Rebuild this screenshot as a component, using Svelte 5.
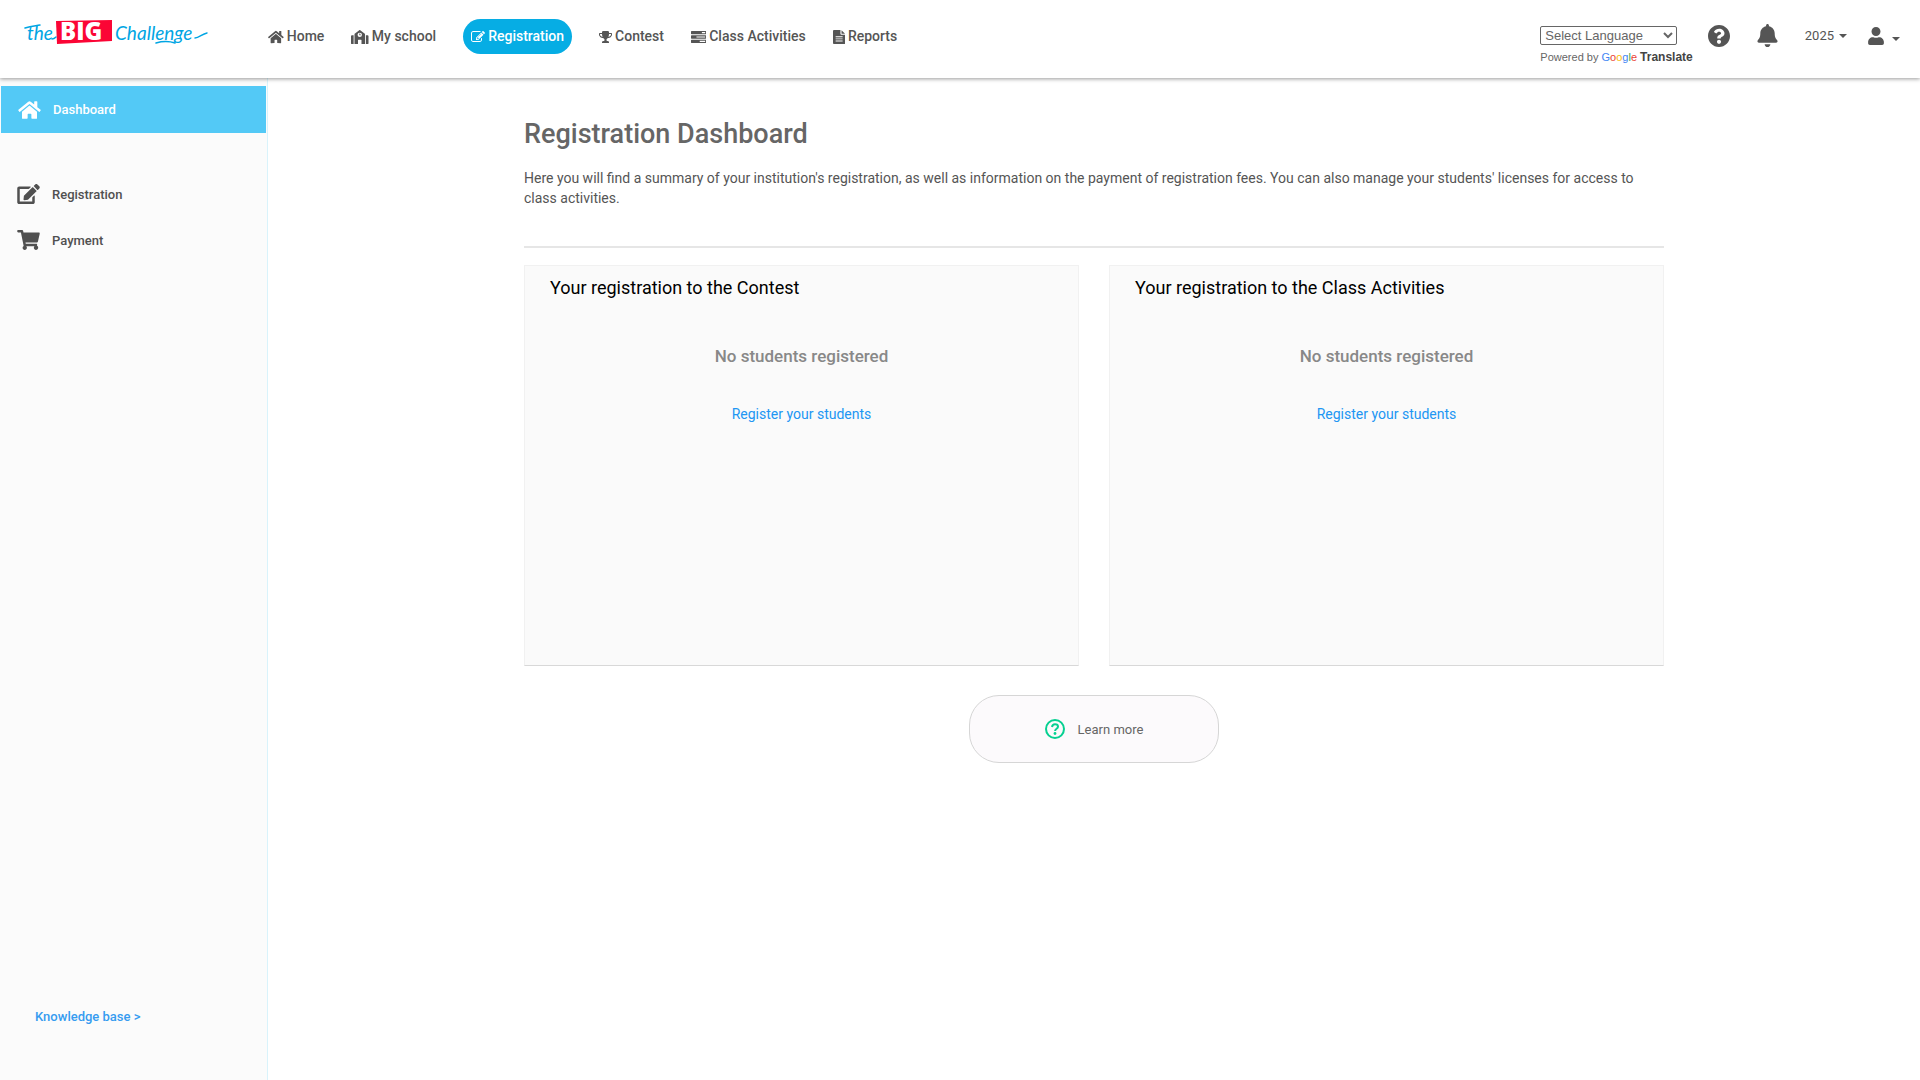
<script lang="ts">
  type Icon = { box: string; d: string };

  const icons: Record<string, Icon> = {
    home: {
      box: '0 0 576 512',
      d: 'M280.37 148.26L96 300.11V464a16 16 0 0 0 16 16l112.06-.29a16 16 0 0 0 15.92-16V368a16 16 0 0 1 16-16h64a16 16 0 0 1 16 16v95.64a16 16 0 0 0 16 16.05L464 480a16 16 0 0 0 16-16V300L295.67 148.26a12.19 12.19 0 0 0-15.3 0zM571.6 251.47L488 182.56V44.05a12 12 0 0 0-12-12h-56a12 12 0 0 0-12 12v72.61L318.47 43a48 48 0 0 0-61 0L4.34 251.47a12 12 0 0 0-1.6 16.9l25.5 31A12 12 0 0 0 45.15 301l235.22-193.74a12.19 12.19 0 0 1 15.3 0L530.9 301a12 12 0 0 0 16.9-1.6l25.5-31a12 12 0 0 0-1.7-16.93z',
    },
    school: {
      box: '0 0 640 512',
      d: 'M0 224v272c0 9 7 16 16 16h80V192H32c-18 0-32 14-32 32zm608-32h-64v320h80c9 0 16-7 16-16V224c0-18-14-32-32-32zM494 126L338 6c-11-8-25-8-36 0L146 126c-11 8-18 16-18 32v354h128V368c0-9 7-16 16-16h96c9 0 16 7 16 16v144h128V158c0-16-7-24-18-32zM320 256a80 80 0 1 1 0-160 80 80 0 0 1 0 160zm16-96v-24c0-4-4-8-8-8h-16c-4 0-8 4-8 8v48c0 4 4 8 8 8h40c4 0 8-4 8-8v-16c0-4-4-8-8-8z',
    },
    write: {
      box: '0 0 1792 1792',
      d: 'M888 1184l116-116-152-152-116 116v56h96v96h56zm440-720q-16-16-33 1l-350 350q-17 17-1 33t33-1l350-350q17-17 1-33zm80 594v190q0 119-84.5 203.5t-203.5 84.5h-832q-119 0-203.5-84.5t-84.5-203.5v-832q0-119 84.5-203.5t203.5-84.5h832q63 0 117 25 15 7 18 23 3 17-9 29l-49 49q-14 14-32 8-23-6-45-6h-832q-66 0-113 47t-47 113v832q0 66 47 113t113 47h832q66 0 113-47t47-113v-126q0-13 9-22l64-64q15-15 35-7t20 29zm-96-738l288 288-672 672h-288v-288zm444 132l-92 92-288-288 92-92q28-28 68-28t68 28l152 152q28 28 28 68t-28 68z',
    },
    trophy: {
      box: '64 128 1664 1536',
      d: 'M522 883q-74-162-74-371h-256v96q0 78 94.500 162t235.500 113zm1078-275v-96h-256q0 209-74 371 141-29 235.500-113t94.500-162zm128-128v128q0 71-41.500 143t-112 130-173 97.500-215.500 44.500q-42 54-95 95-38 34-52.500 72.500t-14.500 89.500q0 54 30.500 91t97.500 37q75 0 133.500 45.500t58.500 114.500v64q0 14-9 23t-23 9h-832q-14 0-23-9t-9-23v-64q0-69 58.500-114.500t133.500-45.500q67 0 97.500-37t30.500-91q0-51-14.500-89.500t-52.500-72.500q-53-41-95-95-113-5-215.500-44.500t-173-97.500-112-130-41.500-143v-128q0-40 28-68t68-28h288v-96q0-66 47-113t113-47h576q66 0 113 47t47 113v96h288q40 0 68 28t28 68z',
    },
    tasks: {
      box: '0 128 1792 1408',
      d: 'M1024 1408h640v-128h-640v128zm-384-512h1024v-128H640v128zm640-512h384V256h-384v128zm512 832v256q0 26-19 45t-45 19H64q-26 0-45-19t-19-45v-256q0-26 19-45t45-19h1664q26 0 45 19t19 45zm0-512v256q0 26-19 45t-45 19H64q-26 0-45-19t-19-45V704q0-26 19-45t45-19h1664q26 0 45 19t19 45zm0-512v256q0 26-19 45t-45 19H64q-26 0-45-19t-19-45V192q0-26 19-45t45-19h1664q26 0 45 19t19 45z',
    },
    file: {
      box: '0 0 448 512',
      d: 'M272 0v144c0 18 14 32 32 32h144v304c0 18-14 32-32 32H32c-18 0-32-14-32-32V32C0 14 14 0 32 0zm40 6l130 130H312zM96 232v34h256v-34zm0 76v34h256v-34zm0 76v34h256v-34z',
    },
    edit: {
      box: '0 0 576 512',
      d: 'M402.6 83.2l90.2 90.2c3.8 3.8 3.8 10 0 13.8L274.4 405.6l-92.8 10.3c-12.4 1.4-22.9-9.1-21.5-21.5l10.3-92.8L388.8 83.2c3.8-3.8 10-3.8 13.8 0zm162-22.9l-48.8-48.8c-15.2-15.2-39.9-15.2-55.2 0l-35.4 35.4c-3.8 3.8-3.8 10 0 13.8l90.2 90.2c3.8 3.8 10 3.8 13.8 0l35.4-35.4c15.2-15.3 15.2-40 0-55.2zM384 346.2V448H64V128h229.8c3.2 0 6.2-1.3 8.5-3.5l40-40c7.6-7.6 2.2-20.5-8.5-20.5H48C21.5 64 0 85.5 0 112v352c0 26.5 21.5 48 48 48h352c26.5 0 48-21.5 48-48V306.2c0-10.7-12.9-16-20.5-8.5l-40 40c-2.2 2.3-3.5 5.3-3.5 8.5z',
    },
    cart: {
      box: '0 0 576 512',
      d: 'M528.12 301.319l47.273-208C578.806 78.301 567.391 64 551.99 64H159.208l-9.166-44.81C147.758 8.021 137.93 0 126.529 0H24C10.745 0 0 10.745 0 24v16c0 13.255 10.745 24 24 24h69.883l70.248 343.435C147.325 417.1 136 435.222 136 456c0 30.928 25.072 56 56 56s56-25.072 56-56c0-15.674-6.447-29.835-16.824-40h209.647C430.447 426.165 424 440.326 424 456c0 30.928 25.072 56 56 56s56-25.072 56-56c0-22.172-12.888-41.332-31.579-50.405l5.517-24.276c3.413-15.018-8.002-29.319-23.403-29.319H218.117l-6.545-32h293.145c11.206 0 20.92-7.754 23.403-18.681z',
    },
    help: {
      box: '8 8 496 496',
      d: 'M504 256c0 136.997-111.043 248-248 248S8 392.997 8 256C8 119.083 119.043 8 256 8s248 111.083 248 248zM262.655 90c-54.497 0-89.255 22.957-116.549 63.758-3.536 5.286-2.353 12.415 2.715 16.258l34.699 26.31c5.205 3.947 12.621 3.008 16.665-2.122 17.864-22.658 30.113-35.797 57.303-35.797 20.429 0 45.698 13.148 45.698 32.958 0 14.976-12.363 22.667-32.534 33.976C247.128 238.528 216 254.941 216 296v4c0 6.627 5.373 12 12 12h56c6.627 0 12-5.373 12-12v-1.333c0-28.462 83.186-29.647 83.186-106.667 0-58.002-60.165-102-116.531-102zM256 338c-25.365 0-46 20.635-46 46 0 25.364 20.635 46 46 46s46-20.636 46-46c0-25.365-20.635-46-46-46z',
    },
    bell: {
      box: '0 0 448 512',
      d: 'M224 512c35.32 0 63.97-28.65 63.97-64H160.03c0 35.35 28.65 64 63.97 64zm215.39-149.71c-19.32-20.76-55.47-51.99-55.47-154.29 0-77.7-54.48-139.9-127.94-155.16V32c0-17.67-14.32-32-31.98-32s-31.98 14.33-31.98 32v20.84C118.56 68.1 64.08 130.3 64.08 208c0 102.3-36.15 133.53-55.47 154.29-6 6.45-8.66 14.16-8.61 21.71.11 16.4 12.98 32 32.1 32h383.8c19.12 0 32-15.6 32.1-32 .05-7.55-2.61-15.27-8.61-21.71z',
    },
    user: {
      box: '0 0 448 512',
      d: 'M224 256c70.7 0 128-57.3 128-128S294.7 0 224 0 96 57.3 96 128s57.3 128 128 128zm89.6 32h-16.7c-22.2 10.2-46.9 16-72.9 16s-50.6-5.8-72.9-16h-16.7C60.2 288 0 348.2 0 422.4V464c0 26.5 21.5 48 48 48h352c26.5 0 48-21.5 48-48v-41.6c0-74.2-60.2-134.4-134.4-134.4z',
    },
  };

  const nav = [
    { label: 'Home', icon: 'home' },
    { label: 'My school', icon: 'school' },
    { label: 'Registration', icon: 'write', active: true },
    { label: 'Contest', icon: 'trophy' },
    { label: 'Class Activities', icon: 'tasks' },
    { label: 'Reports', icon: 'file' },
  ];

  const side = [
    { label: 'Dashboard', icon: 'home', active: true },
    { label: 'Registration', icon: 'edit' },
    { label: 'Payment', icon: 'cart' },
  ];

  const cards = ['Your registration to the Contest', 'Your registration to the Class Activities'];
</script>

{#snippet glyph(name: string)}
  <svg class="icon {name}" viewBox={icons[name].box} aria-hidden="true">
    <path fill-rule="evenodd" d={icons[name].d} />
  </svg>
{/snippet}

<div class="page">
  <header>
    <a class="brand" href="#home" aria-label="The Big Challenge">
      <svg width="188" height="34" viewBox="0 0 188 34">
        <path class="flag" d="M32 2l56-1v21l-55 3z" />
        <g class="script">
          <text x="3" y="21">the</text>
          <text x="91" y="21">Challenge</text>
        </g>
        <g class="swash">
          <path d="M1 9c6-2 9-2 15-3M28 20c2 0 3-1 4-2" />
          <path d="M171 19c4 0 7-4 12-5M132 24c7-2 13-2 19 0" />
        </g>
        <text class="big" x="36" y="21">BIG</text>
      </svg>
    </a>

    <nav>
      {#each nav as item}
        <a href="#{item.icon}" class:active={item.active}>{@render glyph(item.icon)}{item.label}</a>
      {/each}
    </nav>

    <div class="tools">
      <div class="translate">
        <select aria-label="Select Language">
          <option>Select Language</option>
        </select>
        <div class="powered">
          Powered by
          <span class="google"><i class="b">G</i><i class="r">o</i><i class="y">o</i><i class="b">g</i><i class="g">l</i><i class="r">e</i></span>
          <strong>Translate</strong>
        </div>
      </div>
      <button class="tool" aria-label="Help">{@render glyph('help')}</button>
      <button class="tool" aria-label="Notifications">{@render glyph('bell')}</button>
      <button class="year">2025 <span class="caret"></span></button>
      <button class="account" aria-label="Account">{@render glyph('user')}<span class="caret"></span></button>
    </div>
  </header>

  <div class="body">
    <aside>
      {#each side as item}
        <a class="link" href="#{item.label}" class:active={item.active}>{@render glyph(item.icon)}{item.label}</a>
      {/each}
      <a class="kb" href="#kb">Knowledge base &gt;</a>
    </aside>

    <main>
      <div class="content">
        <h1>Registration Dashboard</h1>
        <p class="intro">
          Here you will find a summary of your institution's registration, as well as information on the payment of
          registration fees. You can also manage your students' licenses for access to class activities.
        </p>
        <hr />
        <div class="cards">
          {#each cards as title}
            <section>
              <h2>{title}</h2>
              <p>No students registered</p>
              <a href="#register">Register your students</a>
            </section>
          {/each}
        </div>
        <button class="more">
          <svg width="20" height="20" viewBox="0 0 20 20" aria-hidden="true">
            <circle cx="10" cy="10" r="9" />
            <path d="M7 8c.3-2 1.500-2.700 3-2.700 1.800 0 3 .9 3 2.400 0 2.100-2.900 2-2.900 4.200" />
            <circle class="dot" cx="10" cy="14.500" r="1.400" />
          </svg>
          Learn more
        </button>
      </div>
    </main>
  </div>
</div>

<style>
  :global(body) {
    background: #fff;
    font-family: Roboto, sans-serif;
    color: #555;
  }

  a {
    text-decoration: none;
  }

  button {
    font-family: inherit;
    color: inherit;
    background: none;
    border: 0;
    padding: 0;
  }

  .page {
    display: flex;
    flex-direction: column;
    min-height: 100vh;
  }

  .icon {
    display: block;
    flex: none;
    fill: currentColor;
  }

  header {
    position: relative;
    z-index: 1;
    display: flex;
    align-items: center;
    height: 78px;
    padding: 0 20px 0 24px;
    background: #fff;
    box-shadow: 0 1px 4px rgba(0, 0, 0, 0.4);
    box-sizing: border-box;
  }

  .brand {
    width: 244px;
    padding-bottom: 6px;
  }

  .brand svg {
    display: block;
  }

  .script {
    font: italic 400 19px Lato, sans-serif;
    fill: #00a5e3;
  }

  .swash {
    fill: none;
    stroke: #00a5e3;
    stroke-width: 1.5;
    stroke-linecap: round;
  }

  .flag {
    fill: #fb0535;
  }

  .big {
    font: 800 24px "Open Sans", sans-serif;
    fill: #fff;
  }

  nav {
    display: flex;
    align-items: center;
    gap: 27px;
    margin-bottom: 5px;
  }

  nav a {
    display: flex;
    align-items: center;
    gap: 3px;
    font-size: 14px;
    font-weight: 500;
    line-height: 35px;
    color: #555;
  }

  nav a.active {
    padding: 0 8px;
    border-radius: 18px;
    background: #06ade4;
    color: #fff;
  }

  nav .icon {
    height: 14px;
  }

  nav .trophy,
  nav .tasks {
    height: 12px;
  }

  .tools {
    display: flex;
    align-items: center;
    margin-left: auto;
    margin-bottom: 7px;
  }

  .translate {
    margin-top: 19px;
    font-family: "Liberation Sans", Arial, sans-serif;
  }

  select {
    display: block;
    width: 137px;
    height: 19px;
    padding: 0;
    border: 1px solid #666;
    border-radius: 2px;
    background: #fff;
    color: #666;
    font: 13px "Liberation Sans", Arial, sans-serif;
  }

  .powered {
    margin-top: 4px;
    font-size: 11px;
    line-height: 16px;
    color: #666;
    white-space: nowrap;
  }

  .powered strong {
    font-size: 12px;
    color: #444;
  }

  .google i {
    font-style: normal;
  }

  .google .b {
    color: #4285f4;
  }

  .google .r {
    color: #ea4335;
  }

  .google .y {
    color: #fbbc05;
  }

  .google .g {
    color: #34a853;
  }

  .tool {
    margin-left: 15px;
  }

  .tool + .tool {
    margin-left: 27px;
  }

  .tool .help {
    width: 22px;
    height: 22px;
  }

  .tool .bell {
    width: 21px;
    height: 23px;
  }

  .year,
  .account {
    display: flex;
    align-items: center;
    gap: 8px;
    font-size: 13px;
  }

  .year {
    gap: 5px;
    margin-left: 27px;
  }

  .account {
    margin-left: 21px;
  }

  .account .icon {
    width: 16px;
    height: 18px;
  }

  .account .caret {
    margin-top: 6px;
  }

  .caret {
    border: 4px solid transparent;
    border-top-color: currentColor;
    border-bottom: 0;
  }

  .body {
    flex: 1;
    display: flex;
  }

  aside {
    display: flex;
    flex-direction: column;
    width: 265px;
    padding: 8px 1px 53px;
    background: #fbfbfb;
    border-right: 1px solid #d9f3fb;
  }

  .link {
    display: flex;
    align-items: center;
    gap: 12px;
    height: 46px;
    padding-left: 16px;
    font-size: 13px;
    font-weight: 500;
    color: #505050;
  }

  .link.active {
    height: 47px;
    padding-left: 17px;
    margin-bottom: 38px;
    background: #53c9f6;
    color: #fff;
  }

  .link .icon {
    width: 23px;
    height: 20px;
  }

  .kb {
    margin-top: auto;
    padding-left: 34px;
    font-size: 13px;
    font-weight: 500;
    line-height: 20px;
    color: #369cf0;
  }

  main {
    flex: 1;
    padding: 37px 24px;
  }

  .content {
    max-width: 1140px;
    margin: 0 auto;
  }

  h1 {
    margin: 0 0 15px;
    font-size: 27px;
    font-weight: 500;
    line-height: 38px;
    color: #666;
  }

  .intro {
    margin: 0;
    font-size: 14px;
    line-height: 20px;
    color: #555;
  }

  hr {
    height: 2px;
    margin: 38px 0 17px;
    border: 0;
    background: #e6e6e6;
  }

  .cards {
    display: grid;
    grid-template-columns: 1fr 1fr;
    gap: 30px;
  }

  section {
    min-height: 401px;
    box-sizing: border-box;
    padding: 10px 25px;
    background: #fafafa;
    border: 1px solid #f1f1f1;
    border-bottom-color: #d8d8d8;
    text-align: center;
  }

  h2 {
    margin: 0 0 44px;
    font-size: 18px;
    font-weight: 400;
    line-height: 24px;
    color: #000;
    text-align: left;
  }

  section p {
    margin: 0 0 36px;
    font-size: 17px;
    font-weight: 500;
    line-height: 24px;
    color: #888;
  }

  section a {
    font-size: 14px;
    line-height: 20px;
    color: #2196f3;
  }

  .more {
    display: flex;
    align-items: center;
    justify-content: center;
    gap: 13px;
    width: 250px;
    height: 68px;
    margin: 29px auto 0;
    border: 1px solid #d6d6d6;
    border-radius: 30px;
    background: #fcfafc;
    font-size: 13px;
    color: #666;
  }

  .more svg {
    fill: none;
    stroke: #06d091;
    stroke-width: 2;
  }

  .more .dot {
    fill: #06d091;
    stroke: none;
  }
</style>
